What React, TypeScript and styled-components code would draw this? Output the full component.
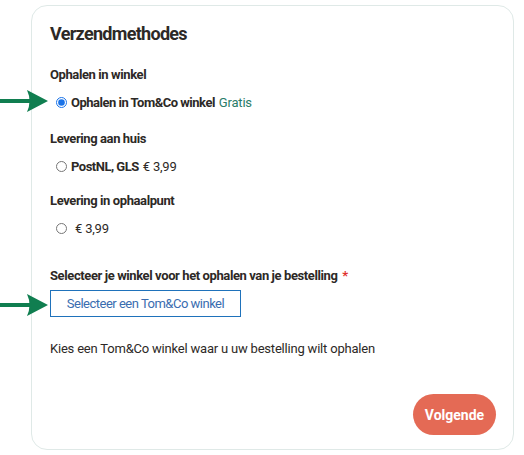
import styled, { createGlobalStyle } from 'styled-components';

const GlobalStyle = createGlobalStyle`
  html, body {
    margin: 0;
    padding: 0;
    background: #ffffff;
  }
  body {
    font-family: 'Roboto', 'Liberation Sans', sans-serif;
    color: #2d2926;
  }
`;

interface ShippingOption {
  name: string;
  price: string;
  free?: boolean;
  checked?: boolean;
}

interface ShippingGroup {
  title: string;
  gap: number;
  option: ShippingOption;
}

const groups: ShippingGroup[] = [
  { title: 'Ophalen in winkel', gap: 21, option: { name: 'Ophalen in Tom&Co winkel', price: 'Gratis', free: true, checked: true } },
  { title: 'Levering aan huis', gap: 19, option: { name: 'PostNL, GLS', price: '€ 3,99' } },
  { title: 'Levering in ophaalpunt', gap: 17, option: { name: '', price: '€ 3,99' } },
];

const Arrow = ({ top }: { top: number }) => (
  <ArrowMark style={{ top }} width="48" height="22" viewBox="0 0 48 22">
    <rect x="0" y="9" width="32" height="4" fill="#107e50" />
    <path d="M27 0 L48 11 L27 22 Q32 11 27 0 Z" fill="#107e50" />
  </ArrowMark>
);

const App = () => {
  return (
    <Page>
      <GlobalStyle />
      <Card>
        <Title>Verzendmethodes</Title>
        {groups.map((group) => (
          <Group key={group.title} $gap={group.gap}>
            <GroupLabel>{group.title}</GroupLabel>
            <OptionRow>
              <Radio type="radio" name="shipping" defaultChecked={group.option.checked} />
              <OptionName>{group.option.name}</OptionName>
              <OptionPrice $free={group.option.free}>{group.option.price}</OptionPrice>
            </OptionRow>
          </Group>
        ))}
        <StoreLabel>
          Selecteer je winkel voor het ophalen van je bestelling <Required>*</Required>
        </StoreLabel>
        <StoreButton type="button">Selecteer een Tom&amp;Co winkel</StoreButton>
        <InfoText>Kies een Tom&amp;Co winkel waar u uw bestelling wilt ophalen</InfoText>
        <Footer>
          <NextButton type="button">Volgende</NextButton>
        </Footer>
      </Card>
      <Arrow top={90} />
      <Arrow top={294} />
    </Page>
  );
};

const Page = styled.div`
  position: relative;
  width: 524px;
  height: 455px;
  padding: 5px 0 0 31px;
  box-sizing: border-box;
`;

const ArrowMark = styled.svg`
  position: absolute;
  left: 0;
`;

const Card = styled.div`
  display: flex;
  flex-direction: column;
  width: 483px;
  height: 445px;
  box-sizing: border-box;
  padding: 17px 17px 14px 18px;
  border: 1px solid #dfe9e7;
  border-radius: 16px;
`;

const Title = styled.h2`
  margin: 0;
  font-size: 18px;
  line-height: 22px;
  font-weight: 700;
  letter-spacing: -0.7px;
`;

const Group = styled.div<{ $gap: number }>`
  display: flex;
  flex-direction: column;
  gap: 9px;
  margin-top: ${(p) => p.$gap}px;
`;

const GroupLabel = styled.div`
  font-size: 13px;
  line-height: 18px;
  font-weight: 700;
  letter-spacing: -0.4px;
`;

const OptionRow = styled.label`
  display: flex;
  align-items: center;
  height: 18px;
  font-size: 13px;
  letter-spacing: -0.2px;
`;

const Radio = styled.input`
  width: 11px;
  height: 11px;
  margin: 0 4px 0 6px;
  accent-color: #1a73e8;
`;

const OptionName = styled.span`
  font-weight: 700;
  margin-right: 4px;
  letter-spacing: -0.5px;
`;

const OptionPrice = styled.span<{ $free?: boolean }>`
  color: ${(p) => (p.$free ? '#2a7c69' : '#2d2926')};
`;

const StoreLabel = styled.div`
  margin-top: 30px;
  font-size: 13px;
  line-height: 18px;
  font-weight: 700;
  letter-spacing: -0.4px;
`;

const Required = styled.span`
  color: #e0312f;
  margin-left: 2px;
`;

const StoreButton = styled.button`
  align-self: flex-start;
  margin-top: 5px;
  width: 191px;
  height: 27px;
  padding: 0;
  background: #ffffff;
  border: 1px solid #1f72bb;
  color: #3a6db0;
  font-family: inherit;
  font-size: 13px;
  letter-spacing: -0.5px;
  cursor: pointer;
`;

const InfoText = styled.p`
  margin: 23px 0 0;
  font-size: 13px;
  line-height: 18px;
  letter-spacing: -0.2px;
`;

const Footer = styled.div`
  display: flex;
  justify-content: flex-end;
  margin-top: auto;
`;

const NextButton = styled.button`
  width: 83px;
  height: 41px;
  border: none;
  border-radius: 21px;
  background: #e46a55;
  color: #ffffff;
  font-family: inherit;
  font-size: 14px;
  font-weight: 700;
  cursor: pointer;
`;

export default App;
